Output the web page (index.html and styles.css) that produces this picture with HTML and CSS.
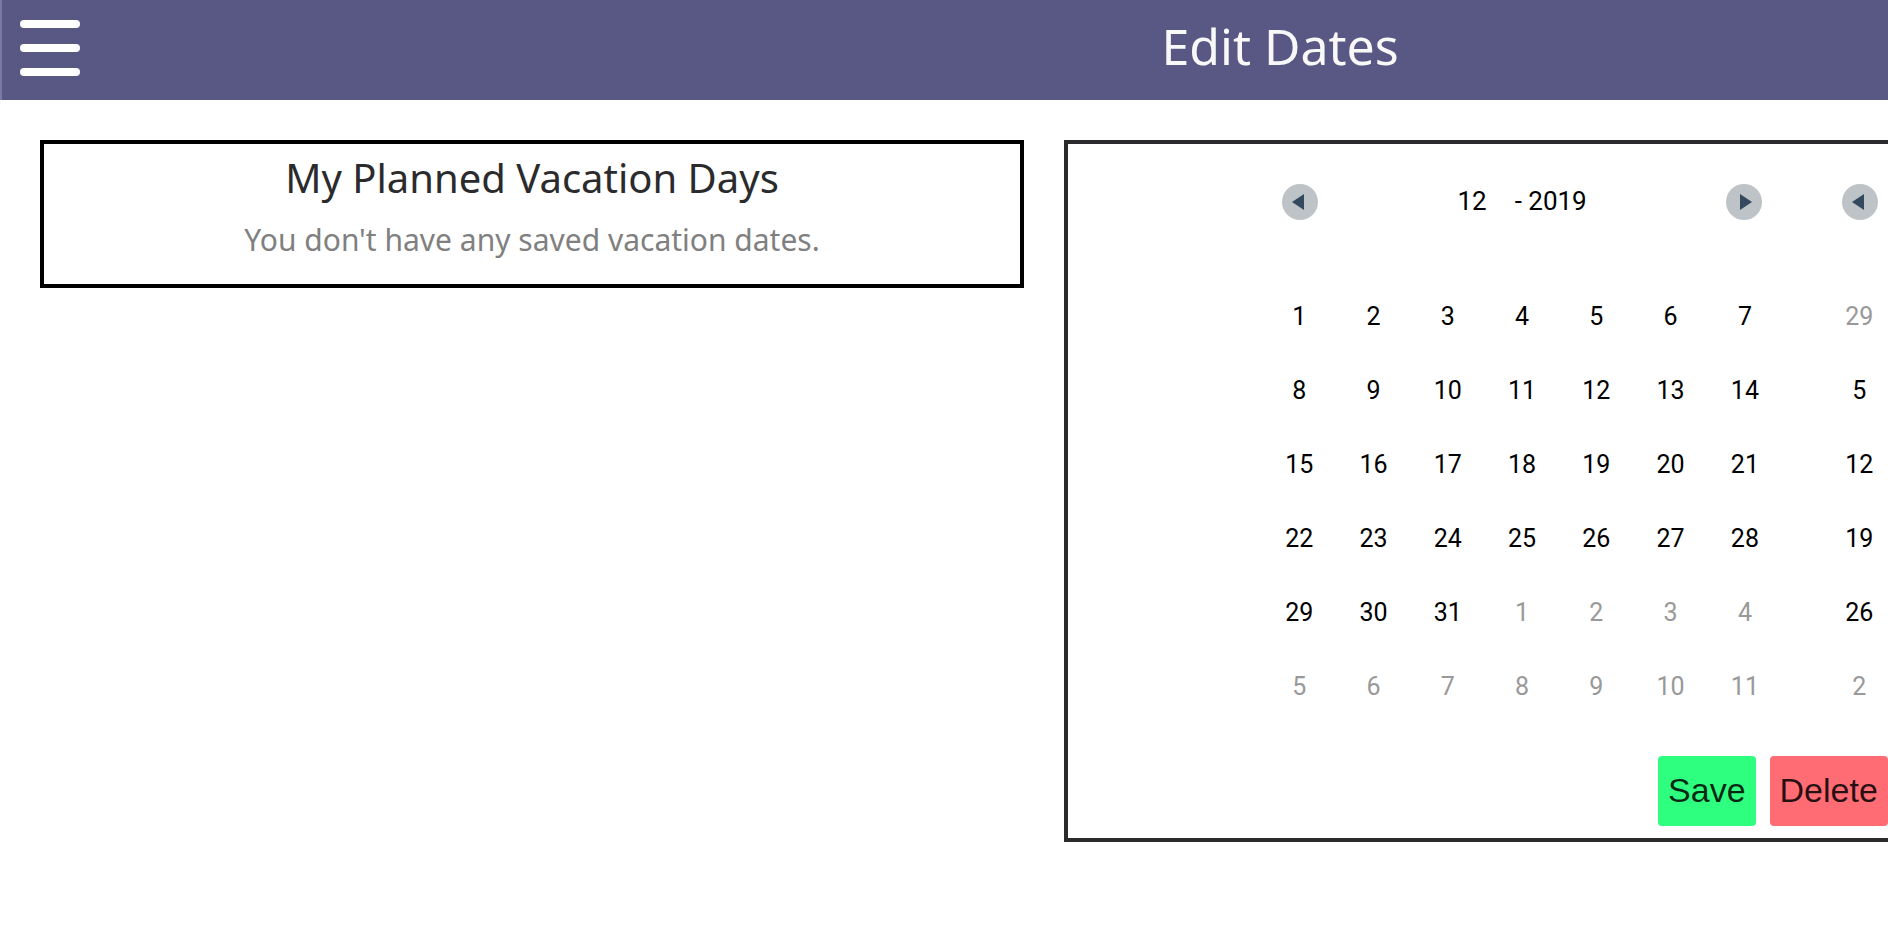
FILE: index.html
```
<!DOCTYPE html>
<html lang="en">
<head>
<meta charset="utf-8">
<title>Edit Dates</title>
<link rel="stylesheet" href="styles.css">
</head>
<body>
<div class="page">
  <header class="topbar">
    <button class="menu" type="button" aria-label="Menu"><span class="bar"></span><span class="bar"></span><span class="bar"></span></button>
    <h1 class="title">Edit Dates</h1>
  </header>
  <main class="content">
    <section class="card planned">
      <h2 class="planned-title">My Planned Vacation Days</h2>
      <p class="planned-empty">You don't have any saved vacation dates.</p>
    </section>
    <section class="card picker">
      <div class="months">
        <div class="month">
          <div class="month-head">
            <button class="nav" type="button" aria-label="Previous month"><svg class="tri" viewBox="0 0 12 16"><path d="M12 0v16L0 8z"/></svg></button>
            <div class="month-label"><span class="month-num">12</span><span>- 2019</span></div>
            <button class="nav next" type="button" aria-label="Next month"><svg class="tri" viewBox="0 0 12 16"><path d="M0 0v16l12-8z"/></svg></button>
          </div>
          <table class="days">
            <tr><td>1</td><td>2</td><td>3</td><td>4</td><td>5</td><td>6</td><td>7</td></tr>
            <tr><td>8</td><td>9</td><td>10</td><td>11</td><td>12</td><td>13</td><td>14</td></tr>
            <tr><td>15</td><td>16</td><td>17</td><td>18</td><td>19</td><td>20</td><td>21</td></tr>
            <tr><td>22</td><td>23</td><td>24</td><td>25</td><td>26</td><td>27</td><td>28</td></tr>
            <tr><td>29</td><td>30</td><td>31</td><td class="off">1</td><td class="off">2</td><td class="off">3</td><td class="off">4</td></tr>
            <tr><td class="off">5</td><td class="off">6</td><td class="off">7</td><td class="off">8</td><td class="off">9</td><td class="off">10</td><td class="off">11</td></tr>
          </table>
        </div>
        <div class="month">
          <div class="month-head">
            <button class="nav" type="button" aria-label="Previous month"><svg class="tri" viewBox="0 0 12 16"><path d="M12 0v16L0 8z"/></svg></button>
          </div>
          <table class="days">
            <tr><td class="off">29</td><td colspan="6"></td></tr>
            <tr><td>5</td><td colspan="6"></td></tr>
            <tr><td>12</td><td colspan="6"></td></tr>
            <tr><td>19</td><td colspan="6"></td></tr>
            <tr><td>26</td><td colspan="6"></td></tr>
            <tr><td class="off">2</td><td colspan="6"></td></tr>
          </table>
        </div>
      </div>
      <div class="actions">
        <button class="action save" type="button">Save</button>
        <button class="action delete" type="button">Delete</button>
      </div>
    </section>
  </main>
</div>
</body>
</html>
```
FILE: styles.css
```
* { box-sizing: border-box; }
html { overflow: hidden; }
body {
  margin: 0;
  overflow: hidden;
  min-height: 100vh;
  background: #fff;
  color: #000;
  font-family: "Noto Sans", "Open Sans", sans-serif;
}
button { border: 0; padding: 0; font: inherit; color: inherit; cursor: pointer; }
.page { width: 135.6%; }

.topbar {
  display: grid;
  grid-template-columns: 1fr auto 1fr;
  align-items: start;
  height: 100px;
  padding: 20px 20px 20px 18px;
  background: #595885;
  border-left: 2px solid #7a79a3;
}
.menu {
  display: flex;
  flex-direction: column;
  gap: 16px;
  width: 60px;
  background: none;
}
.bar { height: 8px; border-radius: 4px; background: #fff; }
.title {
  margin: 0;
  color: #f8f8f8;
  font-size: 50px;
  line-height: 52px;
  font-weight: 400;
}

.content {
  display: grid;
  grid-template-columns: 2fr 3fr;
  align-items: start;
  gap: 40px;
  padding: 40px 20px 40px 40px;
}
.card { border: 4px solid #000; }
.planned { padding: 8px 0 20px; text-align: center; }
.planned-title {
  margin: 0;
  color: #2b2b2d;
  font-size: 40px;
  line-height: 52px;
  font-weight: 400;
}
.planned-empty {
  margin: 12px 0 0;
  color: #808080;
  font-size: 30px;
  line-height: 48px;
}

.picker { padding: 40px 0 12px; border-color: #2b2b2d; }
.months { display: flex; justify-content: center; gap: 40px; }
.month { width: 520px; }
.month-head {
  display: flex;
  align-items: center;
  justify-content: space-between;
  height: 36px;
  margin: 0 20px 60px;
}
.nav {
  display: flex;
  align-items: center;
  width: 36px;
  height: 36px;
  padding-left: 10px;
  border-radius: 50%;
  background: #bdc3c7;
}
.next { padding-left: 14px; }
.tri { width: 12px; height: 16px; fill: #34495e; }
.month-label {
  display: flex;
  gap: 28px;
  padding-bottom: 2px;
  font-family: Roboto, "Noto Sans", sans-serif;
  font-size: 26px;
  line-height: 32px;
}
.days {
  width: 100%;
  table-layout: fixed;
  border-collapse: collapse;
  font-family: Roboto, "Noto Sans", sans-serif;
  font-size: 25px;
  line-height: 30px;
  text-align: center;
}
.days td { height: 74px; padding: 0; }
.off { color: #999; }

.actions {
  display: flex;
  gap: 14px;
  margin-top: 32px;
  padding-left: 590px;
}
.action {
  height: 70px;
  padding: 0 10px 2px;
  border-radius: 4px;
  color: rgba(0, 0, 0, .85);
  font-family: "Liberation Sans", Arial, sans-serif;
  font-size: 34px;
}
.save { background: #2eff7f; }
.delete { background: #ff6c74; }
```
